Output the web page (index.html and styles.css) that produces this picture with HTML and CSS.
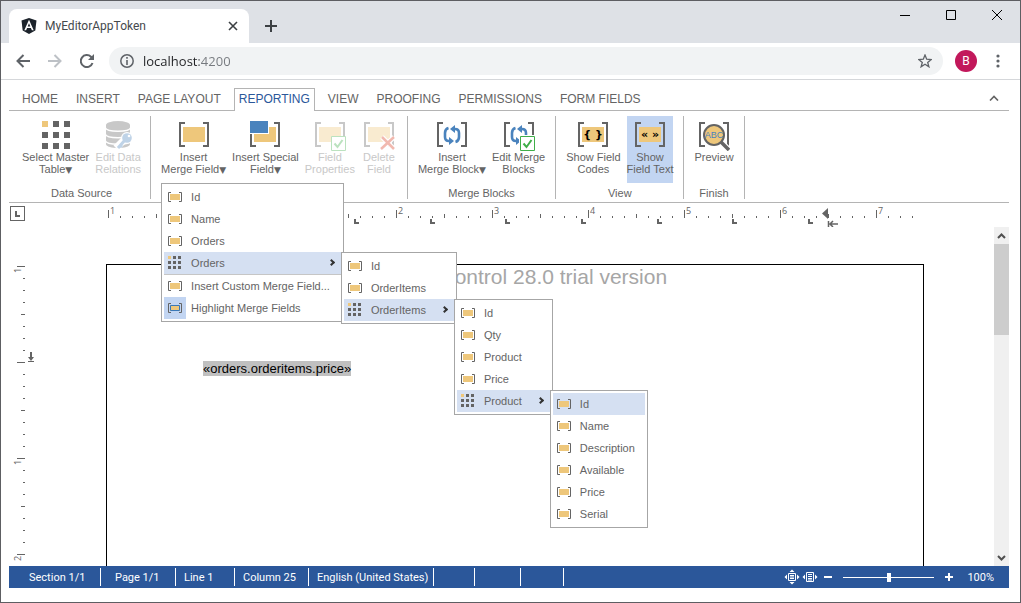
FILE: index.html
```html
<!DOCTYPE html>
<html lang="en">
<head>
  <meta charset="UTF-8">
  <meta name="viewport" content="width=device-width, initial-scale=1.0">
  <title>MyEditorAppToken</title>
  <link rel="stylesheet" href="styles.css">
</head>
<body>
  <!-- shared icons -->
  <svg class="sprite" aria-hidden="true">
    <symbol id="brackets" viewBox="0 0 32 32">
      <path d="M7 4H2v23h5M25 4h5v23h-5" fill="none" stroke="#646464" stroke-width="2"/>
    </symbol>
    <symbol id="check" viewBox="0 0 15 15">
      <path d="M.5.5h14v14H.5z" fill="#fff" stroke="#3fae49"/>
      <path d="M3.500 7.500l3 3.500 5-7" fill="none" stroke="#3fae49" stroke-width="2"/>
    </symbol>
    <symbol id="cycle" viewBox="0 0 20 20">
      <path d="M6.500 3Q3 4 3 8v4q0 4 4 4M13.500 17Q17 16 17 12V8q0-4-4-4" fill="none" stroke="#4a83bd" stroke-width="2.600"/>
      <path d="M7 12l5 4-5 4zM13 0L8 4l5 4z" fill="#4a83bd"/>
    </symbol>
    <symbol id="field" viewBox="0 0 22 22">
      <path d="M7 6.500H4.500v9H7M15 6.500h2.500v9H15" fill="none" stroke="#646464"/>
      <path d="M6 8h10v6H6z" fill="#eec77b"/>
    </symbol>
    <symbol id="table" viewBox="0 0 22 22">
      <path d="M9 4h3v3H9zM14 4h3v3h-3zM4 9h3v3H4zM9 9h3v3H9zM14 9h3v3h-3zM4 14h3v3H4zM9 14h3v3H9zM14 14h3v3h-3z" fill="#646464"/>
      <path d="M4 4h3v3H4z" fill="#eec77b"/>
    </symbol>
    <symbol id="tabstop" viewBox="0 0 5 5">
      <path d="M0 0h2v3h3v2H0z" fill="#646464"/>
    </symbol>
  </svg>

  <div class="window">
    <header class="titlebar">
      <div class="tab">
        <svg class="tab-logo" width="16" height="16" viewBox="0 0 16 16">
          <path d="M8 0l7.500 2.600-1.200 10L8 16l-6.300-3.400L.5 2.600z" fill="#1c232b"/>
          <path d="M8 1.800L3.300 12.300h1.800l1-2.400h3.800l1 2.400h1.800zM8 5.300l1.300 3.100H6.700z" fill="#fff" fill-rule="evenodd"/>
        </svg>
        <span class="tab-title">MyEditorAppToken</span>
        <button class="icon-button" aria-label="Close tab"><svg width="10" height="10"><path d="M1 1l8 8M9 1L1 9" stroke="#3c4043" stroke-width="1.600"/></svg></button>
      </div>
      <button class="icon-button new-tab" aria-label="New tab"><svg width="12" height="12"><path d="M6 0v12M0 6h12" stroke="#3c4043" stroke-width="2"/></svg></button>
      <div class="window-controls">
        <button class="icon-button" aria-label="Minimize"><svg width="10" height="10"><path d="M0 5.500h10" stroke="#000"/></svg></button>
        <button class="icon-button" aria-label="Maximize"><svg width="10" height="10"><path d="M.5.5h9v9h-9z" fill="none" stroke="#000"/></svg></button>
        <button class="icon-button" aria-label="Close"><svg width="10" height="10"><path d="M0 0l10 10M10 0L0 10" stroke="#000"/></svg></button>
      </div>
    </header>

    <div class="toolbar">
      <button class="icon-button" aria-label="Back"><svg width="14" height="14"><path d="M14 7H2M7.500 1l-6 6 6 6" fill="none" stroke="#5f6368" stroke-width="2"/></svg></button>
      <button class="icon-button" aria-label="Forward"><svg width="14" height="14"><path d="M0 7h12M6.500 1l6 6-6 6" fill="none" stroke="#bdc1c6" stroke-width="2"/></svg></button>
      <button class="icon-button" aria-label="Reload"><svg width="14" height="14"><path d="M12.500 9A6 6 0 1 1 11 2.800L12 4" fill="none" stroke="#5f6368" stroke-width="2"/><path d="M14 0v6H8z" fill="#5f6368"/></svg></button>
      <div class="address">
        <svg width="14" height="14"><circle cx="7" cy="7" r="6.200" fill="none" stroke="#5f6368" stroke-width="1.500"/><path d="M6.200 6h1.600v5H6.200zM6.200 3h1.600v1.700H6.200z" fill="#5f6368"/></svg>
        <input class="address-input" type="text" value="localhost:4200" aria-label="Address">
        <button class="icon-button" aria-label="Bookmark"><svg width="14" height="14" viewBox="0 0 14 14"><path d="M7 1l1.700 4.200 4.500.3-3.500 2.900 1.200 4.400L7 10.300l-3.900 2.500 1.200-4.400L.8 5.500l4.500-.3z" fill="none" stroke="#5f6368" stroke-width="1.300"/></svg></button>
      </div>
      <button class="avatar">B</button>
      <button class="icon-button" aria-label="Menu"><svg width="4" height="14"><g fill="#5f6368"><circle cx="2" cy="2" r="1.600"/><circle cx="2" cy="7" r="1.600"/><circle cx="2" cy="12" r="1.600"/></g></svg></button>
    </div>

    <main class="editor">
      <nav class="ribbon-tabs">
        <button class="ribbon-tab">HOME</button>
        <button class="ribbon-tab">INSERT</button>
        <button class="ribbon-tab">PAGE LAYOUT</button>
        <button class="ribbon-tab active">REPORTING</button>
        <button class="ribbon-tab">VIEW</button>
        <button class="ribbon-tab">PROOFING</button>
        <button class="ribbon-tab">PERMISSIONS</button>
        <button class="ribbon-tab">FORM FIELDS</button>
        <button class="icon-button collapse" aria-label="Collapse ribbon"><svg width="10" height="6"><path d="M1 5.500l4-4 4 4" fill="none" stroke="#646464" stroke-width="1.600"/></svg></button>
      </nav>

      <section class="ribbon">
        <div class="group">
          <div class="group-buttons">
            <button class="tool">
              <svg width="32" height="32"><path d="M13 2h6v6h-6zM24 2h6v6h-6zM2 13h6v6H2zM13 13h6v6h-6zM24 13h6v6h-6zM2 24h6v6H2zM13 24h6v6h-6zM24 24h6v6h-6z" fill="#646464"/><path d="M2 2h6v6H2z" fill="#eec77b"/></svg>
              Select Master<br>Table<span class="caret">▼</span>
            </button>
            <button class="tool" disabled>
              <svg width="32" height="32">
                <path d="M4 6v19c0 5.500 24 5.500 24 0V6z" fill="#646464"/>
                <ellipse cx="16" cy="6" rx="12" ry="4" fill="#646464"/>
                <path d="M3 8.500c2 5 24 5 26 0M3 15c2 5 24 5 26 0M3 21.500c2 5 24 5 26 0" fill="none" stroke="#fff" stroke-width="1.600"/>
                <path d="M23 20l-9 9" stroke="#fff" stroke-width="7"/>
                <circle cx="25" cy="19" r="6" fill="#fff"/>
                <path d="M23 21l-7 8M18 26l2 2" stroke="#4a83bd" stroke-width="3"/>
                <circle cx="25" cy="19" r="4.800" fill="#4a83bd"/><circle cx="27" cy="17" r="1.300" fill="#fff"/>
              </svg>
              Edit Data<br>Relations
            </button>
          </div>
          <div class="group-name">Data Source</div>
        </div>

        <div class="group">
          <div class="group-buttons">
            <div class="dropdown">
              <button class="tool">
                <svg width="32" height="32"><use href="#brackets"/><path d="M5 8h22v15H5z" fill="#eec77b"/></svg>
                Insert<br>Merge Field<span class="caret">▼</span>
              </button>
              <ul class="menu">
                <li><button class="item"><svg><use href="#field"/></svg>Id</button></li>
                <li><button class="item"><svg><use href="#field"/></svg>Name</button></li>
                <li><button class="item"><svg><use href="#field"/></svg>Orders</button></li>
                <li>
                  <button class="item parent open"><svg><use href="#table"/></svg>Orders</button>
                  <ul class="menu">
                    <li><button class="item"><svg><use href="#field"/></svg>Id</button></li>
                    <li><button class="item"><svg><use href="#field"/></svg>OrderItems</button></li>
                    <li>
                      <button class="item parent open"><svg><use href="#table"/></svg>OrderItems</button>
                      <ul class="menu">
                        <li><button class="item"><svg><use href="#field"/></svg>Id</button></li>
                        <li><button class="item"><svg><use href="#field"/></svg>Qty</button></li>
                        <li><button class="item"><svg><use href="#field"/></svg>Product</button></li>
                        <li><button class="item"><svg><use href="#field"/></svg>Price</button></li>
                        <li>
                          <button class="item parent open"><svg><use href="#table"/></svg>Product</button>
                          <ul class="menu">
                            <li><button class="item open"><svg><use href="#field"/></svg>Id</button></li>
                            <li><button class="item"><svg><use href="#field"/></svg>Name</button></li>
                            <li><button class="item"><svg><use href="#field"/></svg>Description</button></li>
                            <li><button class="item"><svg><use href="#field"/></svg>Available</button></li>
                            <li><button class="item"><svg><use href="#field"/></svg>Price</button></li>
                            <li><button class="item"><svg><use href="#field"/></svg>Serial</button></li>
                          </ul>
                        </li>
                      </ul>
                    </li>
                  </ul>
                </li>
                <li class="divided"><button class="item"><svg><use href="#field"/></svg>Insert Custom Merge Field...</button></li>
                <li><button class="item checked"><svg><use href="#field"/><path d="M6.500 8.500h9v5h-9z" fill="none" stroke="#3a78b8"/></svg>Highlight Merge Fields</button></li>
              </ul>
            </div>
            <button class="tool">
              <svg width="32" height="32"><use href="#brackets"/><path d="M5 8h22v15H5z" fill="#eec77b"/><path d="M0 1h20v14H0z" fill="#fff"/><path d="M1 2h18v12H1z" fill="#4a83bd"/></svg>
              Insert Special<br>Field<span class="caret">▼</span>
            </button>
            <button class="tool" disabled>
              <svg width="32" height="32"><use href="#brackets"/><path d="M5 8h22v15H5z" fill="#eec77b"/><use href="#check" x="17" y="17" width="15" height="15"/></svg>
              Field<br>Properties
            </button>
            <button class="tool" disabled>
              <svg width="32" height="32"><use href="#brackets"/><path d="M5 8h22v15H5z" fill="#eec77b"/><path d="M19 18l12 12M31 18L18 30" stroke="#fff" stroke-width="5"/><path d="M19 18l12 12M31 18L18 30" stroke="#d9381e" stroke-width="2.500"/></svg>
              Delete<br>Field
            </button>
          </div>
        </div>

        <div class="group">
          <div class="group-buttons">
            <button class="tool">
              <svg width="32" height="32"><use href="#brackets"/><use href="#cycle" x="6" y="6" width="20" height="20"/></svg>
              Insert<br>Merge Block<span class="caret">▼</span>
            </button>
            <button class="tool">
              <svg width="32" height="32"><use href="#brackets"/><use href="#cycle" x="6" y="6" width="20" height="20"/><path d="M16 16h16v16H16z" fill="#fff"/><use href="#check" x="17" y="17" width="15" height="15"/></svg>
              Edit Merge<br>Blocks
            </button>
          </div>
          <div class="group-name">Merge Blocks</div>
        </div>

        <div class="group">
          <div class="group-buttons">
            <button class="tool">
              <svg width="32" height="32"><use href="#brackets"/><path d="M5 8h22v15H5z" fill="#eec77b"/><text class="glyph" x="16" y="19">{ }</text></svg>
              Show Field<br>Codes
            </button>
            <button class="tool pressed">
              <svg width="32" height="32"><use href="#brackets"/><path d="M5 8h22v15H5z" fill="#eec77b"/><text class="glyph" x="16" y="19">« »</text></svg>
              Show<br>Field Text
            </button>
          </div>
          <div class="group-name">View</div>
        </div>

        <div class="group">
          <div class="group-buttons">
            <button class="tool">
              <svg width="32" height="32"><use href="#brackets"/><path d="M22 22l9 9" stroke="#fff" stroke-width="6"/><circle cx="16" cy="16" r="12" fill="#fff"/><path d="M23 23l8 8" stroke="#646464" stroke-width="3.500"/><circle cx="16" cy="16" r="10" fill="#eec77b" stroke="#646464" stroke-width="2"/><text class="abc" x="16" y="19">ABC</text></svg>
              Preview
            </button>
          </div>
          <div class="group-name">Finish</div>
        </div>
      </section>

      <div class="ruler-row">
        <button class="icon-button tab-kind" aria-label="Tab type"><svg width="5" height="6"><path d="M0 0h2v4h3v2H0z" fill="#646464"/></svg></button>
        <svg class="ruler" width="818" height="24">
          <defs>
            <pattern id="minor" x="2" width="12" height="24" patternUnits="userSpaceOnUse"><path d="M0 13h1v2H0z" fill="#646464"/></pattern>
            <pattern id="major" x="2" width="96" height="24" patternUnits="userSpaceOnUse"><path d="M0 7h1v8H0zM48 11h1v4h-1z" fill="#646464"/></pattern>
          </defs>
          <path d="M2 0h806v24H2z" fill="url(#minor)"/>
          <path d="M2 0h806v24H2z" fill="url(#major)"/>
          <g class="ruler-numbers">
            <text x="4" y="11">1</text><text x="196" y="11">1</text><text x="292" y="11">2</text><text x="388" y="11">3</text>
            <text x="484" y="11">4</text><text x="580" y="11">5</text><text x="676" y="11">6</text><text x="772" y="11">7</text>
          </g>
          <use href="#tabstop" x="248" y="16" width="5" height="5"/>
          <use href="#tabstop" x="324" y="16" width="5" height="5"/>
          <use href="#tabstop" x="399" y="16" width="5" height="5"/>
          <use href="#tabstop" x="475" y="16" width="5" height="5"/>
          <use href="#tabstop" x="551" y="16" width="5" height="5"/>
          <use href="#tabstop" x="626" y="16" width="5" height="5"/>
          <use href="#tabstop" x="702" y="16" width="5" height="5"/>
          <path d="M722 5v11l-6-5.500z" fill="#646464"/>
          <path d="M722.500 18v6M724 21h8M727 18l-3 3 3 3" fill="none" stroke="#646464" stroke-width="1.500"/>
        </svg>
      </div>

      <div class="workspace">
        <svg class="ruler-side" width="27" height="339">
          <defs>
            <pattern id="minor-side" y="39" width="27" height="12" patternUnits="userSpaceOnUse"><path d="M14 0h2v1h-2z" fill="#646464"/></pattern>
            <pattern id="major-side" y="39" width="27" height="96" patternUnits="userSpaceOnUse"><path d="M8 0h8v1H8zM12 48h4v1h-4z" fill="#646464"/></pattern>
          </defs>
          <path d="M0 39h27v289H0z" fill="url(#minor-side)"/>
          <path d="M0 39h27v289H0z" fill="url(#major-side)"/>
          <g class="ruler-numbers">
            <text transform="translate(12 46) rotate(-90)">1</text>
            <text transform="translate(12 238) rotate(-90)">1</text>
            <text transform="translate(12 334) rotate(-90)">2</text>
          </g>
          <path d="M21 125h2v5h2l-3 4-3-4h2zM19 134h6v1h-6z" fill="#646464"/>
        </svg>
        <div class="canvas">
          <article class="page">
            <div class="watermark">TX Text Control 28.0 trial version</div>
            <p class="paragraph"><span class="merge-field">«orders.orderitems.price»</span></p>
          </article>
        </div>
        <div class="scrollbar">
          <button class="icon-button" aria-label="Scroll up"><svg width="9" height="6"><path d="M1 5l3.500-3.500L8 5" fill="none" stroke="#505050" stroke-width="2"/></svg></button>
          <div class="thumb"></div>
          <button class="icon-button scroll-down" aria-label="Scroll down"><svg width="9" height="6"><path d="M1 1l3.500 3.500L8 1" fill="none" stroke="#505050" stroke-width="2"/></svg></button>
        </div>
      </div>

      <footer class="statusbar">
        <span class="status">Section 1/1</span>
        <span class="status">Page 1/1</span>
        <span class="status">Line 1</span>
        <span class="status">Column 25</span>
        <span class="status">English (United States)</span>
        <span class="status"></span>
        <span class="status"></span>
        <span class="status"></span>
        <div class="zoom">
          <button class="icon-button" aria-label="Fit page"><svg width="16" height="16"><path d="M4.500 4.500h7v7h-7zM6 6.500h4M6 8h4M6 9.500h4" fill="none" stroke="#fff"/><path d="M5.500 3L8 .5 10.500 3zM5.500 13L8 15.500l2.500-2.500zM3 5.500L.5 8 3 10.500zM13 5.500L15.500 8 13 10.500z" fill="#fff"/></svg></button>
          <button class="icon-button" aria-label="Fit width"><svg width="16" height="16"><path d="M4.500 3.500h7v9h-7zM6 5.500h4M6 7.500h4M6 9.500h4M6 11h4" fill="none" stroke="#fff"/><path d="M3 5.500L.5 8 3 10.500zM13 5.500L15.500 8 13 10.500z" fill="#fff"/></svg></button>
          <button class="icon-button" aria-label="Zoom out"><svg width="8" height="8"><path d="M0 4h8" stroke="#fff" stroke-width="2"/></svg></button>
          <input class="slider" type="range" min="0" max="200" value="100" aria-label="Zoom">
          <button class="icon-button" aria-label="Zoom in"><svg width="8" height="8"><path d="M0 4h8M4 0v8" stroke="#fff" stroke-width="2"/></svg></button>
          <span class="zoom-value">100%</span>
        </div>
      </footer>
    </main>
  </div>
</body>
</html>
```
FILE: styles.css
```css
* { box-sizing: border-box; }
body { margin: 0; font-family: "Liberation Sans", Arial, sans-serif; font-size: 11px; color: #646464; background: #fff; }
button { font: inherit; color: inherit; background: none; border: none; padding: 0; margin: 0; }
svg { display: block; flex-shrink: 0; }
ul { list-style: none; margin: 0; padding: 0; }
.sprite { position: absolute; width: 0; height: 0; }
.icon-button { display: flex; align-items: center; justify-content: center; }

/* browser window */
.window { display: flex; flex-direction: column; height: 100vh; border: 1px solid #5d5e62; overflow: hidden; }
.titlebar { display: flex; align-items: flex-end; height: 42px; padding-left: 8px; background: #dee1e6; flex-shrink: 0; }
.tab { display: flex; align-items: center; width: 240px; height: 34px; padding: 0 11px 0 12px; background: #fff; border-radius: 8px 8px 0 0; }
.tab-title { flex: 1; margin-left: 8px; font: 12px Roboto, sans-serif; color: #45494d; }
.new-tab { width: 44px; height: 34px; }
.window-controls { display: flex; align-self: flex-start; margin-left: auto; }
.window-controls .icon-button { width: 46px; height: 28px; }
.toolbar { display: flex; align-items: center; gap: 18px; height: 37px; padding: 0 20px 0 15px; border-bottom: 1px solid #d5d7da; flex-shrink: 0; }
.address { display: flex; align-items: center; flex: 1; height: 28px; margin: 0 -6px 0 -3px; padding: 0 11px; background: #f1f3f4; border-radius: 14px; }
.address-input { flex: 1; min-width: 0; margin-left: 9px; padding: 0; border: none; outline: none; font: 13px "Open Sans", sans-serif; color: transparent; background: linear-gradient(to right, #202124 56px, #75797e 56px); -webkit-background-clip: text; background-clip: text; }
.avatar { width: 22px; height: 22px; margin-right: 1px; border-radius: 50%; background: #c2185b; color: #fff; font: 12px Roboto, sans-serif; }

/* ribbon */
.editor { display: flex; flex-direction: column; flex: 1; min-height: 0; padding: 8px 11px 14px 8px; }
.ribbon-tabs { display: flex; height: 23px; padding-left: 4px; border-bottom: 1px solid #b4b4b4; font-size: 12px; flex-shrink: 0; }
.ribbon-tab { height: 23px; margin: 0 4px; padding: 0 4px 2px; border: 1px solid transparent; border-bottom: none; white-space: nowrap; }
.ribbon-tab.active { color: #2b579a; background: #fff; border-color: #b4b4b4; }
.collapse { margin-left: auto; width: 30px; height: 20px; }
.ribbon { display: flex; height: 92px; padding: 5px 0 3px; border-bottom: 1px solid #b4b4b4; flex-shrink: 0; }
.group { display: flex; flex-direction: column; padding: 0 10px; border-right: 1px solid #b4b4b4; }
.group:first-child { padding: 0 9px 0 13px; }
.group-buttons { display: flex; align-items: flex-start; gap: 6px; height: 67px; }
.group-name { margin-top: 4px; line-height: 12px; text-align: center; }
.tool { display: block; min-width: 36px; padding: 3px 0 8px; line-height: 12px; text-align: center; white-space: nowrap; }
.tool svg { margin: 0 auto; }
.tool:disabled { color: #c8c8c8; }
.tool:disabled svg { opacity: 0.35; }
.tool.pressed { background: #c2d5f2; }
.caret { font: 9px "DejaVu Sans", sans-serif; line-height: 9px; }
.glyph { font: bold 11px "DejaVu Sans", sans-serif; fill: #000; text-anchor: middle; }
.abc { font: 9px "Liberation Sans", sans-serif; fill: #4a83bd; text-anchor: middle; }

/* menus */
.dropdown { position: relative; }
.menu { position: absolute; top: 100%; left: 0; z-index: 2; padding: 2px; background: #fff; border: 1px solid #a6a6a6; }
.menu li { position: relative; }
.menu .menu { top: 0; left: 100%; }
.divided { border-top: 1px solid #c6c6c6; }
.item { display: flex; align-items: center; width: 100%; height: 22px; padding-right: 10px; white-space: nowrap; }
.item svg { width: 22px; height: 22px; margin-right: 5px; }
.divided .item { padding-right: 11px; }
.item.parent { padding-right: 28px; }
.item.parent::after { content: ""; position: absolute; right: 7px; top: 8px; width: 3px; height: 3px; border: solid #333; border-width: 2px 2px 0 0; transform: rotate(45deg); }
.item.open { background: #d5e0f2; }
.item.checked svg { background: #c2d5f2; }

/* document */
.ruler-row { display: flex; height: 24px; padding-right: 15px; flex-shrink: 0; }
.tab-kind { width: 15px; height: 15px; margin: 3px 11px 0 1px; border: 1px solid #646464; }
.ruler { margin: 0 auto; }
.ruler-numbers { font: 9px "Open Sans", sans-serif; fill: #646464; }
.workspace { display: flex; flex: 1; min-height: 0; overflow: hidden; }
.canvas { display: flex; flex: 1; justify-content: center; padding-top: 37px; }
.page { width: 100%; max-width: 818px; border: 1px solid #000; border-bottom: none; }
.watermark { font-size: 21px; line-height: 24px; text-align: center; color: #a6a6a6; }
.paragraph { margin: 72px 96px 0; font-size: 13px; line-height: 15px; color: #000; }
.merge-field { background: #c0c0c0; }
.scrollbar { display: flex; flex-direction: column; width: 15px; background: #f0f0f0; }
.scrollbar .icon-button { height: 17px; }
.thumb { height: 91px; background: #cdcdcd; }
.scroll-down { margin-top: auto; }

/* status bar */
.statusbar { display: grid; grid-template-columns: 92px 75px 59px 74px 125px 41px 46px 43px 1fr; align-items: center; height: 22px; background: #2b579a; color: #fff; font: 11px Roboto, sans-serif; flex-shrink: 0; }
.status { height: 18px; padding-left: 8px; border-right: 1px solid #fff; line-height: 19px; white-space: nowrap; }
.status:nth-child(1) { padding-left: 20px; }
.status:nth-child(2) { padding-left: 14px; }
.zoom { display: flex; align-items: center; justify-content: flex-end; padding-right: 15px; }
.zoom .icon-button + .icon-button { margin-left: 2px; }
.zoom .icon-button:nth-child(3) { margin-left: 6px; }
.slider { appearance: none; width: 91px; height: 9px; margin: 0 11px; background: linear-gradient(#fff, #fff) center / 100% 1px no-repeat; }
.slider::-webkit-slider-thumb { appearance: none; width: 4px; height: 9px; background: #fff; }
.zoom-value { margin-left: 14px; }
```
